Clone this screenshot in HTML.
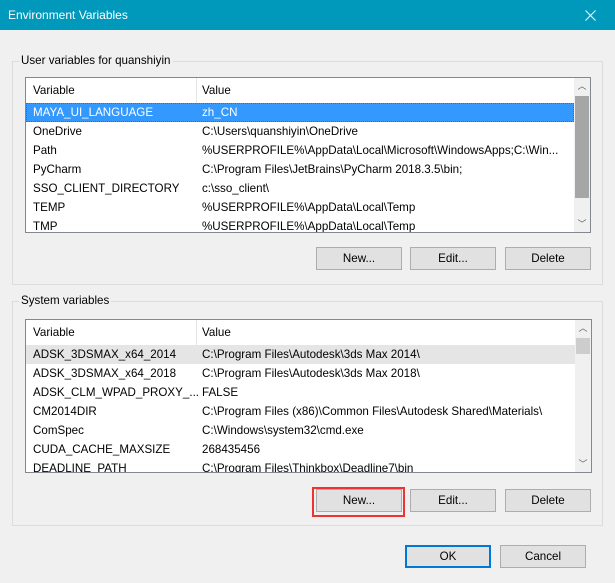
<!DOCTYPE html>
<html><head><meta charset="utf-8"><style>
*{margin:0;padding:0;box-sizing:border-box}
body{width:615px;height:583px;background:#f0f0f0;font-family:"Liberation Sans",sans-serif;font-size:11.6px;color:#000;position:relative;overflow:hidden}
.title{position:absolute;left:0;top:0;width:615px;height:30px;background:#0099bc;color:#fff;font-size:12px;line-height:30px;padding-left:8px}
.x{position:absolute;left:585px;top:10px}
.grp{position:absolute;border:1px solid #dcdcdc}
.lbl{position:absolute;background:#f0f0f0;padding:0 2px;line-height:14px}
.list{position:absolute;background:#fff;border:1px solid #828790;overflow:hidden}
.hdr{height:25px;line-height:25px;position:relative}
.hdr span,.row span{position:absolute}
.c1{left:7px}.c2{left:176px}
.sep{position:absolute;left:170px;top:0;width:1px;height:25px;background:#e5e5e5}
.row{height:19px;line-height:19px;position:relative;white-space:nowrap}
.sel{background:#3399ff;color:#fff;outline:1px dotted #99542a;outline-offset:-1px}
.hl{background:#e5e5e5}
.sb{position:absolute;right:0;top:0;width:16px;bottom:0;background:#f0f0f0}
.sb .th{position:absolute;left:1px;width:14px;background:#cdcdcd}
.sb .a{position:absolute;left:0;width:16px;text-align:center;font-size:9px;color:#606060;line-height:16px}
.btn{position:absolute;width:86px;height:23px;background:#e1e1e1;border:1px solid #adadad;text-align:center;line-height:21px}
</style></head><body>
<div class="title">Environment Variables<svg class="x" width="11" height="11" viewBox="0 0 11 11"><path d="M0.5 0.5L10.5 10.5M10.5 0.5L0.5 10.5" stroke="#fff" stroke-width="1"/></svg></div>

<div class="grp" style="left:12px;top:61px;width:591px;height:224px"></div>
<div class="lbl" style="left:19px;top:54px">User variables for quanshiyin</div>
<div class="list" style="left:25px;top:77px;width:566px;height:156px">
<div class="hdr"><span class="c1">Variable</span><div class="sep"></div><span class="c2">Value</span></div>
<div class="row sel" style="margin-right:16px"><span class="c1">MAYA_UI_LANGUAGE</span><span class="c2">zh_CN</span></div>
<div class="row"><span class="c1">OneDrive</span><span class="c2">C:\Users\quanshiyin\OneDrive</span></div>
<div class="row"><span class="c1">Path</span><span class="c2">%USERPROFILE%\AppData\Local\Microsoft\WindowsApps;C:\Win...</span></div>
<div class="row"><span class="c1">PyCharm</span><span class="c2">C:\Program Files\JetBrains\PyCharm 2018.3.5\bin;</span></div>
<div class="row"><span class="c1">SSO_CLIENT_DIRECTORY</span><span class="c2">c:\sso_client\</span></div>
<div class="row"><span class="c1">TEMP</span><span class="c2">%USERPROFILE%\AppData\Local\Temp</span></div>
<div class="row"><span class="c1">TMP</span><span class="c2">%USERPROFILE%\AppData\Local\Temp</span></div>
<div class="sb"><div class="a" style="top:0">︿</div><div class="th" style="top:18px;height:102px;background:#a6a6a6"></div><div class="a" style="bottom:0">﹀</div></div>
</div>
<div class="btn" style="left:316px;top:247px">New...</div>
<div class="btn" style="left:410px;top:247px">Edit...</div>
<div class="btn" style="left:505px;top:247px">Delete</div>

<div class="grp" style="left:12px;top:301px;width:591px;height:225px"></div>
<div class="lbl" style="left:19px;top:294px">System variables</div>
<div class="list" style="left:25px;top:319px;width:567px;height:154px">
<div class="hdr"><span class="c1">Variable</span><div class="sep"></div><span class="c2">Value</span></div>
<div class="row hl" style="margin-right:16px"><span class="c1">ADSK_3DSMAX_x64_2014</span><span class="c2">C:\Program Files\Autodesk\3ds Max 2014\</span></div>
<div class="row"><span class="c1">ADSK_3DSMAX_x64_2018</span><span class="c2">C:\Program Files\Autodesk\3ds Max 2018\</span></div>
<div class="row"><span class="c1">ADSK_CLM_WPAD_PROXY_...</span><span class="c2">FALSE</span></div>
<div class="row"><span class="c1">CM2014DIR</span><span class="c2">C:\Program Files (x86)\Common Files\Autodesk Shared\Materials\</span></div>
<div class="row"><span class="c1">ComSpec</span><span class="c2">C:\Windows\system32\cmd.exe</span></div>
<div class="row"><span class="c1">CUDA_CACHE_MAXSIZE</span><span class="c2">268435456</span></div>
<div class="row"><span class="c1">DEADLINE_PATH</span><span class="c2">C:\Program Files\Thinkbox\Deadline7\bin</span></div>
<div class="sb"><div class="a" style="top:0">︿</div><div class="th" style="top:18px;height:16px"></div><div class="a" style="bottom:0">﹀</div></div>
</div>
<div style="position:absolute;left:312px;top:487px;width:93px;height:30px;border:2px solid #ee3333"></div>
<div class="btn" style="left:316px;top:489px">New...</div>
<div class="btn" style="left:410px;top:489px">Edit...</div>
<div class="btn" style="left:505px;top:489px">Delete</div>

<div class="btn" style="left:405px;top:545px;border:2px solid #0078d7;line-height:19px">OK</div>
<div class="btn" style="left:500px;top:545px">Cancel</div>
</body></html>
